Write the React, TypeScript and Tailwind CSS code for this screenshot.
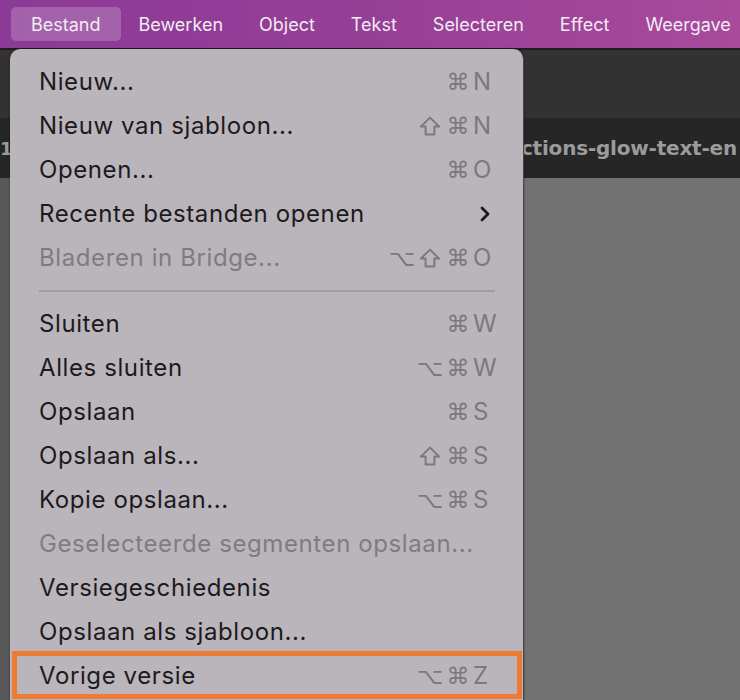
import { ChevronRight } from 'lucide-react';

type Item = {
  label: string;
  keys?: string[];
  disabled?: boolean;
  submenu?: boolean;
  sep?: boolean;
  highlight?: boolean;
};

const menus = ['Bestand', 'Bewerken', 'Object', 'Tekst', 'Selecteren', 'Effect', 'Weergave'];

const items: Item[] = [
  { label: 'Nieuw...', keys: ['⌘', 'N'] },
  { label: 'Nieuw van sjabloon...', keys: ['⇧', '⌘', 'N'] },
  { label: 'Openen...', keys: ['⌘', 'O'] },
  { label: 'Recente bestanden openen', submenu: true },
  { label: 'Bladeren in Bridge...', keys: ['⌥', '⇧', '⌘', 'O'], disabled: true },
  { label: '', sep: true },
  { label: 'Sluiten', keys: ['⌘', 'W'] },
  { label: 'Alles sluiten', keys: ['⌥', '⌘', 'W'] },
  { label: 'Opslaan', keys: ['⌘', 'S'] },
  { label: 'Opslaan als...', keys: ['⇧', '⌘', 'S'] },
  { label: 'Kopie opslaan...', keys: ['⌥', '⌘', 'S'] },
  { label: 'Geselecteerde segmenten opslaan...', disabled: true },
  { label: 'Versiegeschiedenis' },
  { label: 'Opslaan als sjabloon...' },
  { label: 'Vorige versie', keys: ['⌥', '⌘', 'Z'], highlight: true },
];

function ShiftIcon() {
  return (
    <svg width="22" height="20" viewBox="0 0 22 20" fill="none" stroke="currentColor" strokeWidth="2" strokeLinejoin="round">
      <path d="M11 1.6 L20.2 10.6 H15.4 V18.4 H6.6 V10.6 H1.8 Z" />
    </svg>
  );
}

function Shortcut({ keys }: { keys: string[] }) {
  const mods = keys.slice(0, -1);
  const letter = keys[keys.length - 1];
  return (
    <div className="flex items-center text-[#7c7780]">
      {mods.map((k, i) => (
        <span
          key={i}
          className="flex w-[28px] justify-center text-[23px] leading-none"
          style={{ fontFamily: '"DejaVu Sans", sans-serif' }}
        >
          {k === '⇧' ? <ShiftIcon /> : k}
        </span>
      ))}
      <span className="w-[26px] pl-[1px] text-left text-[24px] leading-none">{letter}</span>
    </div>
  );
}

function Row({ item }: { item: Item }) {
  if (item.sep) {
    return (
      <div className="flex h-[22px] items-center pl-[29px] pr-[28px]">
        <div className="h-[2px] w-full bg-[#a29ca4]" />
      </div>
    );
  }
  const row = (
    <div
      className={`flex h-[44px] items-center justify-between pl-[29px] pr-[25px] text-[24px] ${
        item.disabled ? 'text-[#807b83]' : 'text-[#1c1a1d]'
      }`}
    >
      <span className="whitespace-nowrap tracking-[0.6px]">{item.label}</span>
      {item.keys && <Shortcut keys={item.keys} />}
      {item.submenu && <ChevronRight className="mr-[1px] h-[24px] w-[24px] text-[#1c1a1d]" strokeWidth={2.8} />}
    </div>
  );
  if (item.highlight) {
    return (
      <div className="relative">
        {row}
        <div className="pointer-events-none absolute left-[2px] right-[1px] top-[-3px] h-[48px] border-[5px] border-[#ef7a33]" />
      </div>
    );
  }
  return row;
}

export default function App() {
  return (
    <div
      className="relative h-[700px] w-[740px] overflow-hidden bg-[#727272]"
      style={{ fontFamily: 'Inter, "Noto Sans", sans-serif' }}
    >
      <div className="flex h-[48px] items-center bg-gradient-to-r from-[#8b3a97] via-[#963f97] to-[#a94a9c] pl-[11px] text-[18px] text-[#f3ebf3]">
        {menus.map((m, i) => (
          <div
            key={m}
            className={`flex h-[34px] items-center rounded-[5px] ${
              i === 0 ? 'bg-white/20 px-[20px]' : 'px-[18px]'
            }`}
          >
            {m}
          </div>
        ))}
      </div>
      <div className="h-[2px] bg-[#241a24]" />
      <div className="h-[68px] bg-[#323232]" />
      <div
        className="flex h-[60px] items-center justify-between bg-[#262626] pr-[3px] text-[20px] font-bold text-[#9b9b9b]"
        style={{ fontFamily: '"DejaVu Sans", sans-serif' }}
      >
        <span className="text-[18px]">1</span>
        <span className="tracking-[-0.2px]">ctions-glow-text-en</span>
      </div>
      <div className="h-[522px] w-[10px] bg-[#585858]" />

      <div className="absolute left-[10px] top-[49px] w-[514px] rounded-t-[10px] border-r border-[#4a464b] bg-[#bab5bb] pt-[11px] pb-[10px] shadow-[0_0_2px_rgba(0,0,0,0.5)]">
        {items.map((it, i) => (
          <Row key={i} item={it} />
        ))}
      </div>
    </div>
  );
}
